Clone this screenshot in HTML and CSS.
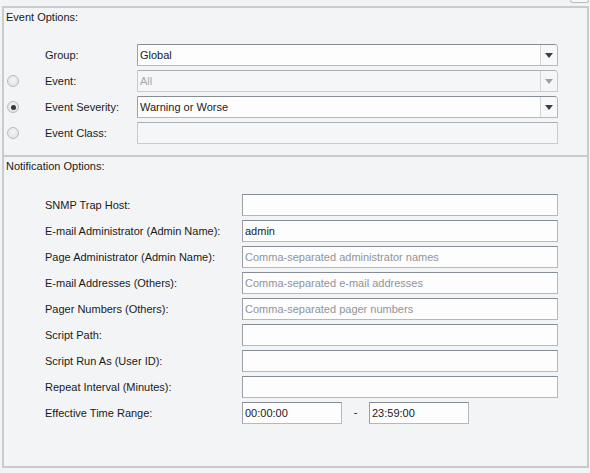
FILE: index.html
```html
<!DOCTYPE html>
<html lang="en">
<head>
    <meta charset="UTF-8">
    <title>Alert Settings</title>
    <link rel="stylesheet" href="styles.css">
</head>
<body>
    <div class="topbar">
        <span class="corner-btn"></span>
    </div>
    <div class="panel">
        <div class="section event-options">
            <div class="section-title">Event Options:</div>
            <div class="rows">
                <div class="row">
                    <span class="radio-cell"></span>
                    <label>Group:</label>
                    <div class="select">
                        <span class="value">Global</span>
                        <span class="drop"><i class="arrow"></i></span>
                    </div>
                </div>
                <div class="row">
                    <span class="radio-cell"><span class="radio"></span></span>
                    <label>Event:</label>
                    <div class="select disabled">
                        <span class="value">All</span>
                        <span class="drop"><i class="arrow"></i></span>
                    </div>
                </div>
                <div class="row">
                    <span class="radio-cell"><span class="radio checked"></span></span>
                    <label>Event Severity:</label>
                    <div class="select">
                        <span class="value">Warning or Worse</span>
                        <span class="drop"><i class="arrow"></i></span>
                    </div>
                </div>
                <div class="row">
                    <span class="radio-cell"><span class="radio"></span></span>
                    <label>Event Class:</label>
                    <div class="field disabled"></div>
                </div>
            </div>
        </div>
        <div class="section notify-options">
            <div class="section-title">Notification Options:</div>
            <div class="rows">
                <div class="row">
                    <label>SNMP Trap Host:</label>
                    <div class="field"></div>
                </div>
                <div class="row">
                    <label>E-mail Administrator (Admin Name):</label>
                    <div class="field">admin</div>
                </div>
                <div class="row">
                    <label>Page Administrator (Admin Name):</label>
                    <div class="field placeholder">Comma-separated administrator names</div>
                </div>
                <div class="row">
                    <label>E-mail Addresses (Others):</label>
                    <div class="field placeholder">Comma-separated e-mail addresses</div>
                </div>
                <div class="row">
                    <label>Pager Numbers (Others):</label>
                    <div class="field placeholder">Comma-separated pager numbers</div>
                </div>
                <div class="row">
                    <label>Script Path:</label>
                    <div class="field"></div>
                </div>
                <div class="row">
                    <label>Script Run As (User ID):</label>
                    <div class="field"></div>
                </div>
                <div class="row">
                    <label>Repeat Interval (Minutes):</label>
                    <div class="field"></div>
                </div>
                <div class="row">
                    <label>Effective Time Range:</label>
                    <div class="time-range">
                        <div class="field time">00:00:00</div>
                        <span class="dash">-</span>
                        <div class="field time">23:59:00</div>
                    </div>
                </div>
            </div>
        </div>
    </div>
</body>
</html>
```

FILE: styles.css
```css
body {
    margin: 0;
    background: #f2f3f5;
    font-family: 'Liberation Sans', Arial, sans-serif;
    font-size: 11px;
    color: #1a1a1a;
    width: 590px;
    height: 473px;
    overflow: hidden;
}
.topbar {
    height: 6px;
    display: flex;
    justify-content: flex-end;
}
.corner-btn {
    width: 17px;
    height: 2px;
    margin-right: 1px;
    border: 1px solid #b8bcc0;
    border-top: none;
    border-radius: 0 0 3px 3px;
    background: #f7f8f9;
}
.panel {
    margin: 0 1px 0 2px;
    height: 458px;
    border: 2px solid #c8ccd0;
    background: #f3f4f6;
    box-sizing: content-box;
}
.section-title {
    padding: 2px 0 0 2px;
    height: 14px;
    line-height: 14px;
}
.event-options {
    height: 147px;
    border-bottom: 2px solid #c8ccd0;
}
.event-options .rows {
    padding-top: 20px;
}
.notify-options .rows {
    padding-top: 21px;
}
.rows {
    display: flex;
    flex-direction: column;
    gap: 4px;
}
.row {
    display: grid;
    align-items: center;
    height: 22px;
}
.event-options .row {
    grid-template-columns: 41px 92px 421px;
}
.notify-options .row {
    grid-template-columns: 41px 197px 316px;
}
.notify-options .row label {
    grid-column: 2;
}
.radio-cell {
    display: flex;
    justify-content: center;
    padding-right: 23px;
}
.radio {
    width: 10px;
    height: 10px;
    border: 1px solid #b7bbbf;
    border-radius: 50%;
    background: radial-gradient(circle at 50% 40%, #f4f5f6, #dcdfe2);
    display: flex;
    align-items: center;
    justify-content: center;
}
.radio.checked::after {
    content: '';
    width: 5px;
    height: 5px;
    border-radius: 50%;
    background: #34383c;
}
.select,
.field {
    box-sizing: border-box;
    height: 22px;
    border: 1px solid #b4b9be;
    border-top-color: #858c93;
    border-left-color: #9aa0a6;
    background: #fdfdfe;
    line-height: 20px;
    padding-left: 2px;
    white-space: nowrap;
    overflow: hidden;
}
.select {
    display: flex;
    border-radius: 0 4px 0 0;
}
.select .value {
    flex: 1;
}
.drop {
    width: 16px;
    border-left: 1px solid #d3d6d9;
    display: flex;
    align-items: center;
    justify-content: center;
    background: #f7f8f9;
}
.arrow {
    width: 0;
    height: 0;
    border-left: 4px solid transparent;
    border-right: 4px solid transparent;
    border-top: 5px solid #3a4046;
}
.select.disabled,
.field.disabled {
    background: #f4f6f8;
    border-color: #c8ccd0;
    border-top-color: #a9afb5;
    color: #a3a8ad;
}
.select.disabled .drop {
    background: #f4f6f8;
}
.select.disabled .arrow {
    border-top-color: #9ba0a5;
}
.placeholder {
    color: #8f9499;
}
.time-range {
    display: flex;
    align-items: center;
}
.field.time {
    width: 100px;
}
.dash {
    width: 27px;
    text-align: center;
    padding-bottom: 3px;
}
```
